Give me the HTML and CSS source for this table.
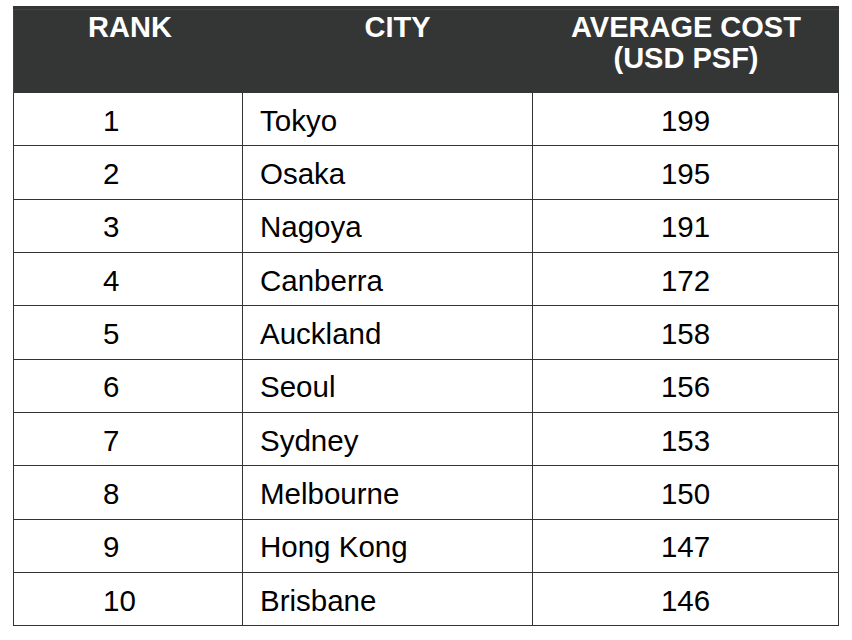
FILE: index.html
```html
<!DOCTYPE html>
<html>
<head>
<meta charset="utf-8">
<link rel="stylesheet" href="styles.css">
</head>
<body>
<table class="rank-table">
  <thead>
    <tr>
      <th class="col-rank">RANK</th>
      <th class="col-city">CITY</th>
      <th class="col-cost">AVERAGE COST<br>(USD PSF)</th>
    </tr>
  </thead>
  <tbody>
    <tr><td class="rank">1</td><td class="city">Tokyo</td><td class="cost">199</td></tr>
    <tr><td class="rank">2</td><td class="city">Osaka</td><td class="cost">195</td></tr>
    <tr><td class="rank">3</td><td class="city">Nagoya</td><td class="cost">191</td></tr>
    <tr><td class="rank">4</td><td class="city">Canberra</td><td class="cost">172</td></tr>
    <tr><td class="rank">5</td><td class="city">Auckland</td><td class="cost">158</td></tr>
    <tr><td class="rank">6</td><td class="city">Seoul</td><td class="cost">156</td></tr>
    <tr><td class="rank">7</td><td class="city">Sydney</td><td class="cost">153</td></tr>
    <tr><td class="rank">8</td><td class="city">Melbourne</td><td class="cost">150</td></tr>
    <tr><td class="rank">9</td><td class="city">Hong Kong</td><td class="cost">147</td></tr>
    <tr><td class="rank">10</td><td class="city">Brisbane</td><td class="cost">146</td></tr>
  </tbody>
</table>
</body>
</html>
```

FILE: styles.css
```css
html, body {
  margin: 0;
  padding: 0;
  background: #ffffff;
}

body {
  padding: 6px 0 0 13px;
  font-family: "Liberation Sans", Arial, sans-serif;
}

.rank-table {
  border-collapse: separate;
  border-spacing: 0;
  table-layout: fixed;
  width: 826px;
  border-top: 3px solid #343535;
}

.rank-table th,
.rank-table td {
  box-sizing: border-box;
  padding: 0;
}

.rank-table th {
  background: #343535;
  color: #ffffff;
  font-weight: bold;
  font-size: 29px;
  line-height: 31px;
  height: 84px;
  vertical-align: top;
  text-align: center;
  padding-top: 2px;
  border-top: 1px solid #a3182f;
}

.col-rank {
  width: 230px;
  border-left: 1px solid #a3182f;
  padding-left: 3px !important;
}

.col-city {
  width: 290px;
  padding-left: 19px !important;
}

.col-cost {
  width: 306px;
}

.rank-table td {
  height: 53.33px;
  padding-top: 3px;
  font-size: 29.5px;
  color: #000000;
  vertical-align: middle;
  border-right: 1px solid #333333;
  border-bottom: 1px solid #333333;
}

.rank-table td.rank {
  border-left: 1px solid #333333;
  padding-left: 89px;
  text-align: left;
}

.rank-table td.city {
  padding-left: 17px;
  text-align: left;
}

.rank-table td.cost {
  text-align: center;
}
```
